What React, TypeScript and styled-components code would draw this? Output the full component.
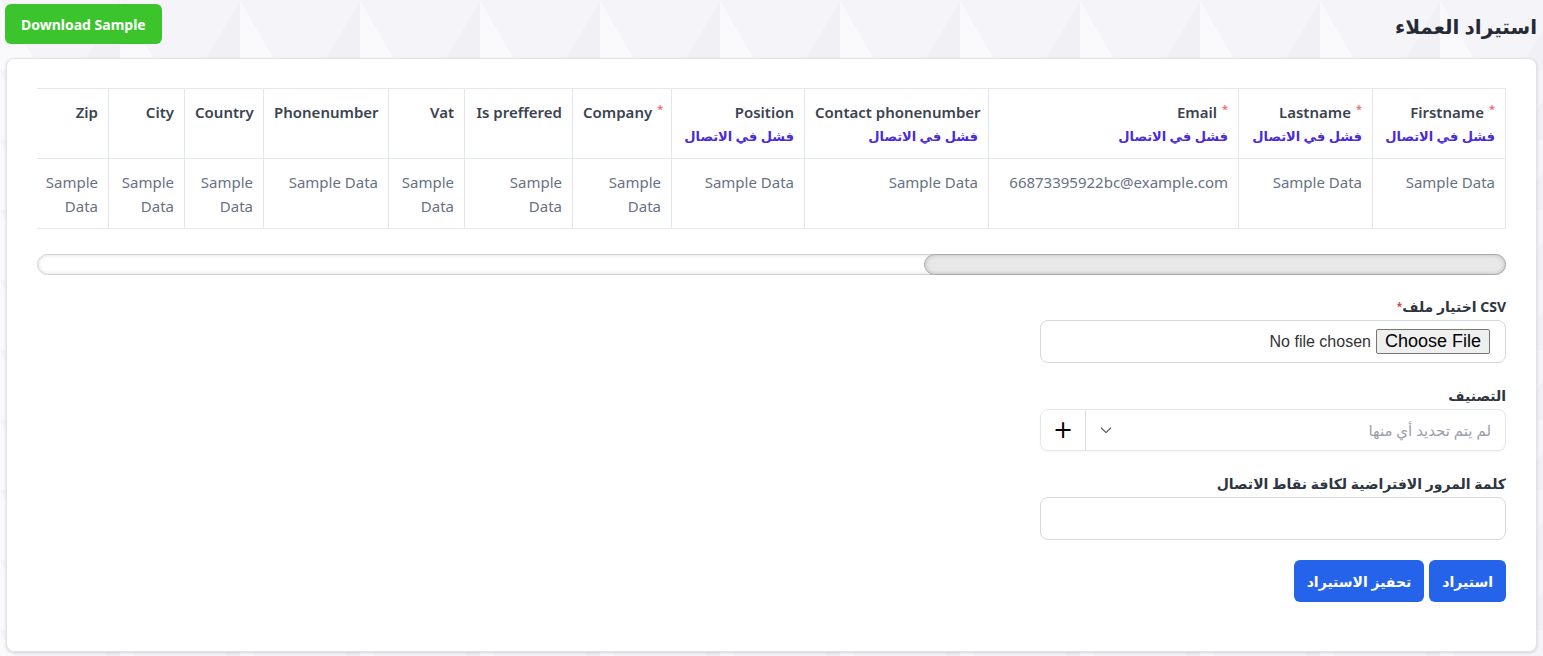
import React from "react";
import styled, { createGlobalStyle } from "styled-components";

const Global = createGlobalStyle`
  html, body { margin: 0; padding: 0; }
  body {
    background: #f4f4f8;
    font-family: "Noto Sans", "DejaVu Sans", sans-serif;
    direction: rtl;
  }
  * { box-sizing: border-box; }
`;

const Page = styled.div`
  padding: 4px 6px 5px 6px;
  min-height: 656px;
  background-color: #f5f5f9;
  background-image:
    linear-gradient(60deg, rgba(255,255,255,0.5) 25%, transparent 25%),
    linear-gradient(-60deg, rgba(235,235,242,0.5) 25%, transparent 25%);
  background-size: 120px 70px;
`;

const TopBar = styled.div`
  display: flex;
  align-items: center;
  justify-content: space-between;
  height: 40px;
  margin-bottom: 14px;
`;

const Title = styled.h1`
  margin: 0;
  font-size: 20px;
  font-weight: 700;
  color: #252b36;
  line-height: 1;
  position: relative;
  top: 3px;
`;

const GreenButton = styled.button`
  height: 40px;
  padding: 0 16px;
  margin-left: -1px;
  border: none;
  border-radius: 6px;
  background: #3cc42d;
  color: #fff;
  font-family: inherit;
  font-weight: 700;
  font-size: 14px;
  cursor: pointer;
`;

const Card = styled.div`
  background: #fff;
  border: 1px solid #e1e3e8;
  border-radius: 8px;
  box-shadow: 0 1px 3px rgba(0,0,0,0.15);
  padding: 29px 30px 46px 30px;
  height: 594px;
`;

const TableArea = styled.div`
  overflow: hidden;
`;

const Table = styled.table`
  border-collapse: collapse;
  table-layout: fixed;
  direction: rtl;
  width: 1470px;
`;

const Th = styled.th<{ $w: number; $last?: boolean }>`
  width: ${(p) => p.$w}px;
  border: 1px solid #e3e7ee;
  ${(p) => (p.$last ? "border-left: none;" : "")}
  padding: 11px 10px 10px 10px;
  text-align: right;
  vertical-align: top;
  height: 70px;
  white-space: nowrap;
  font-size: 15px;
  font-weight: 600;
  color: #3a4350;
  line-height: 24px;
`;

const Td = styled.td<{ $last?: boolean }>`
  border: 1px solid #e3e7ee;
  ${(p) => (p.$last ? "border-left: none;" : "")}
  padding: 11px 10px 10px 10px;
  text-align: right;
  vertical-align: top;
  height: 70px;
  font-size: 15px;
  color: #687184;
  line-height: 24px;
  direction: ltr;
`;

const Req = styled.span`
  color: #f06a6a;
  font-size: 11px;
  vertical-align: top;
  position: relative;
  top: -3px;
  margin-left: 5px;
`;

const HeadName = styled.div`
  direction: ltr;
  text-align: right;
`;

const Fail = styled.div`
  color: #4a2bd6;
  font-weight: 700;
  font-size: 13px;
  direction: rtl;
`;

const ScrollTrack = styled.div`
  margin-top: 25px;
  height: 21px;
  border: 1px solid #d0d0d0;
  border-radius: 11px;
  background: #fff;
  box-shadow: inset 0 0 4px rgba(0,0,0,0.15);
  display: flex;
`;

const ScrollThumb = styled.div`
  width: 582px;
  margin: -1px;
  height: 21px;
  border: 1px solid #a9a9a9;
  border-radius: 11px;
  background: #e8e8e8;
  box-shadow: inset 0 0 4px rgba(0,0,0,0.2);
`;

const Form = styled.div`
  width: 466px;
  margin-top: 22px;
  display: flex;
  flex-direction: column;
`;

const Field = styled.div`
  display: flex;
  flex-direction: column;
  gap: 4px;
  margin-bottom: 23px;
`;

const Label = styled.label`
  font-size: 14px;
  font-weight: 700;
  color: #2e3440;
  line-height: 19px;
`;

const Star = styled.span`
  color: #e23c3c;
  font-size: 10px;
  vertical-align: top;
`;

const InputBox = styled.div`
  height: 43px;
  border: 1px solid #d5d8de;
  border-radius: 8px;
  display: flex;
  align-items: center;
  padding: 0 15px;
  background: #fff;
`;

const FileInput = styled.input`
  font-family: "Liberation Sans", Arial, sans-serif;
  font-size: 16px;
  color: #333;
  direction: rtl;
  &::file-selector-button {
    font-family: "Liberation Sans", Arial, sans-serif;
    font-size: 18px;
    padding: 1px 8px;
    margin-left: 5px;
    background: #efefef;
    border: 1px solid #767676;
    border-radius: 2px;
    color: #000;
  }
`;

const TextInput = styled.input`
  height: 43px;
  border: 1px solid #d5d8de;
  border-radius: 8px;
  padding: 0 12px;
  font-family: inherit;
  font-size: 14px;
  outline: none;
`;

const SelectGroup = styled.div`
  display: flex;
  height: 42px;
  border: 1px solid #e3e6ec;
  border-radius: 8px;
  box-shadow: 0 1px 2px rgba(0,0,0,0.05);
  overflow: hidden;
`;

const SelectBox = styled.div`
  flex: 1;
  display: flex;
  align-items: center;
  justify-content: space-between;
  padding: 0 14px 0 12px;
  color: #9aa0ab;
  font-size: 15px;
`;

const PlusBtn = styled.button`
  width: 45px;
  border: none;
  border-right: 1px solid #d9dde4;
  background: #fff;
  font-size: 24px;
  color: #000;
  display: flex;
  align-items: center;
  justify-content: center;
  padding: 0;
  font-family: "DejaVu Sans", sans-serif;
`;

const Actions = styled.div`
  display: flex;
  gap: 5px;
  margin-top: -3px;
`;

const BlueButton = styled.button`
  height: 42px;
  padding: 0 13px;
  border: none;
  border-radius: 6px;
  background: #2563eb;
  color: #fff;
  font-family: inherit;
  font-weight: 700;
  font-size: 14px;
`;

type Col = { name: string; w: number; req?: boolean; fail?: boolean; data?: string };

const cols: Col[] = [
  { name: "Firstname", w: 133, req: true, fail: true },
  { name: "Lastname", w: 134, req: true, fail: true },
  { name: "Email", w: 250, req: true, fail: true, data: "66873395922bc@example.com" },
  { name: "Contact phonenumber", w: 184, fail: true },
  { name: "Position", w: 133, fail: true },
  { name: "Company", w: 99, req: true },
  { name: "Is preffered", w: 108 },
  { name: "Vat", w: 76 },
  { name: "Phonenumber", w: 125 },
  { name: "Country", w: 79 },
  { name: "City", w: 76 },
  { name: "Zip", w: 73 },
];

const Chevron = () => (
  <svg width="16" height="16" viewBox="0 0 24 24" fill="none" stroke="#555" strokeWidth="1.6" strokeLinecap="round" strokeLinejoin="round">
    <path d="M5 9l7 7 7-7" />
  </svg>
);

export default function App() {
  return (
    <>
      <Global />
      <Page>
        <TopBar>
          <Title>استيراد العملاء</Title>
          <GreenButton>Download Sample</GreenButton>
        </TopBar>
        <Card>
          <TableArea>
            <Table>
              <thead>
                <tr>
                  {cols.map((c, i) => (
                    <Th key={c.name} $w={c.w} $last={i === cols.length - 1}>
                      <HeadName>
                        {c.name}
                        {c.req && <Req>*</Req>}
                      </HeadName>
                      {c.fail && <Fail>فشل في الاتصال</Fail>}
                    </Th>
                  ))}
                </tr>
              </thead>
              <tbody>
                <tr>
                  {cols.map((c, i) => (
                    <Td key={c.name} $last={i === cols.length - 1}>
                      {c.data ?? "Sample Data"}
                    </Td>
                  ))}
                </tr>
              </tbody>
            </Table>
          </TableArea>
          <ScrollTrack>
            <ScrollThumb />
          </ScrollTrack>

          <Form>
            <Field>
              <Label>
                CSV اختيار ملف<Star>*</Star>
              </Label>
              <InputBox>
                <FileInput type="file" />
              </InputBox>
            </Field>
            <Field>
              <Label>التصنيف</Label>
              <SelectGroup>
                <SelectBox>
                  <span>لم يتم تحديد أي منها</span>
                  <Chevron />
                </SelectBox>
                <PlusBtn>+</PlusBtn>
              </SelectGroup>
            </Field>
            <Field>
              <Label>كلمة المرور الافتراضية لكافة نقاط الاتصال</Label>
              <TextInput type="text" />
            </Field>
            <Actions>
              <BlueButton>استيراد</BlueButton>
              <BlueButton>تحفيز الاستيراد</BlueButton>
            </Actions>
          </Form>
        </Card>
      </Page>
    </>
  );
}
